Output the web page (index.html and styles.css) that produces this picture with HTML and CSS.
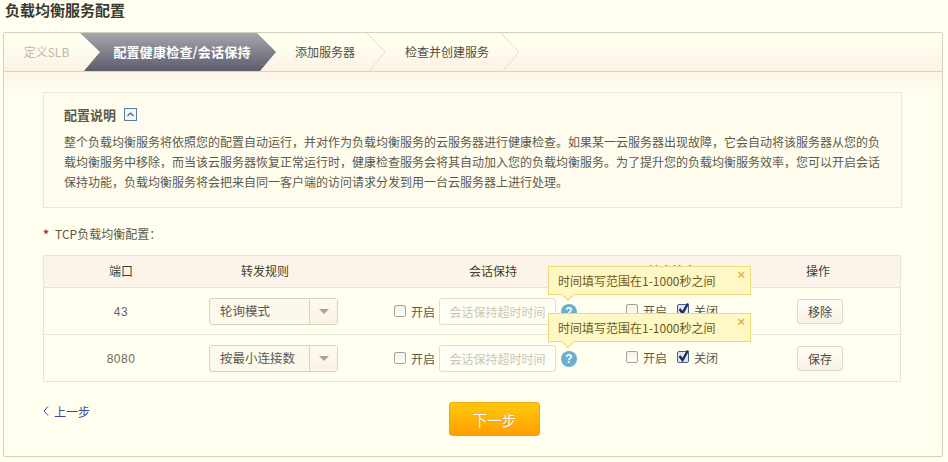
FILE: index.html
```html
<!DOCTYPE html>
<html lang="zh">
<head>
<meta charset="utf-8">
<title>负载均衡服务配置</title>
<link rel="stylesheet" href="styles.css">
</head>
<body>
<h1 class="title">负载均衡服务配置</h1>
<div class="panel">
  <div class="steps">
    <div class="step done">定义SLB</div>
    <div class="step active">配置健康检查/会话保持</div>
    <div class="step s3">添加服务器<svg class="chev" width="20" height="38" viewBox="0 0 20 38"><path d="M0 0L18 19L2 38" fill="none" stroke="#e2dcc8"/></svg></div>
    <div class="step s4">检查并创建服务<svg class="chev" width="20" height="38" viewBox="0 0 20 38"><path d="M0 0L18 19L2 38" fill="none" stroke="#e2dcc8"/></svg></div>
  </div>
  <div class="body">
    <section class="note">
      <div class="note-head"><b>配置说明</b><svg class="toggle" width="13" height="13" viewBox="0 0 13 13"><rect x=".5" y=".5" width="12" height="12" fill="#f6f6f0" stroke="#5a7ca0"/><path d="M3.5 8L6.5 5L9.5 8" fill="none" stroke="#3c6490" stroke-width="1.2"/></svg></div>
      <p>整个负载均衡服务将依照您的配置自动运行，并对作为负载均衡服务的云服务器进行健康检查。如果某一云服务器出现故障，它会自动将该服务器从您的负载均衡服务中移除，而当该云服务器恢复正常运行时，健康检查服务会将其自动加入您的负载均衡服务。为了提升您的负载均衡服务效率，您可以开启会话保持功能，负载均衡服务将会把来自同一客户端的访问请求分发到用一台云服务器上进行处理。</p>
    </section>
    <div class="label"><span class="star">*</span>TCP负载均衡配置：</div>
    <div class="table">
      <div class="row head">
        <div>端口</div><div>转发规则</div><div>会话保持</div><div class="head-hc">健康检查</div><div class="head-op">操作</div>
      </div>
      <div class="row">
        <div class="port">43</div>
        <div class="rule"><span class="select"><span class="sel-text">轮询模式</span><span class="sel-arrow"><i></i></span></span></div>
        <div class="sess"><span class="check"><i class="box"></i>开启</span><span class="input">会话保持超时时间</span>
          <span class="help">?<span class="tip">时间填写范围在1-1000秒之间<em>×</em></span></span></div>
        <div class="hc"><span class="check"><i class="box"></i>开启</span><span class="check"><i class="box on"><svg width="13" height="14" viewBox="0 0 13 14"><path d="M2.5 7L5.5 11L11 1.5" fill="none" stroke="#1b2f5c" stroke-width="2.4"/></svg></i>关闭</span></div>
        <div class="op"><button class="btn">移除</button></div>
      </div>
      <div class="row">
        <div class="port">8080</div>
        <div class="rule"><span class="select"><span class="sel-text">按最小连接数</span><span class="sel-arrow"><i></i></span></span></div>
        <div class="sess"><span class="check"><i class="box"></i>开启</span><span class="input">会话保持超时时间</span>
          <span class="help">?<span class="tip">时间填写范围在1-1000秒之间<em>×</em></span></span></div>
        <div class="hc"><span class="check"><i class="box"></i>开启</span><span class="check"><i class="box on"><svg width="13" height="14" viewBox="0 0 13 14"><path d="M2.5 7L5.5 11L11 1.5" fill="none" stroke="#1b2f5c" stroke-width="2.4"/></svg></i>关闭</span></div>
        <div class="op"><button class="btn">保存</button></div>
      </div>
    </div>
    <div class="foot">
      <a class="prev" href="#"><svg width="6" height="10" viewBox="0 0 6 10"><path d="M5 0.5L1 5L5 9.5" fill="none" stroke="#3a4a94"/></svg>上一步</a>
      <button class="next">下一步</button>
    </div>
  </div>
</div>
</body>
</html>
```
FILE: styles.css
```css
* { box-sizing: border-box; }
html, body { margin: 0; padding: 0; }
body {
  width: 948px; height: 462px; overflow: hidden;
  background: #fffeef;
  font-family: "Noto Sans CJK SC", "Liberation Sans", sans-serif;
  font-size: 12px; color: #5c5a4c;
  padding: 0 3px;
}
.title { margin: 0; height: 32px; padding: 0 0 0 2px; font-size: 15px; line-height: 20px; font-weight: 700; color: #3a3a30; }
.panel { width: 940px; height: 425px; border: 1px solid #d4d1ba; border-radius: 2px; background: #fffeef; }
.steps {
  display: flex; height: 39px; border-bottom: 1px solid #d8d4bf;
  background: linear-gradient(#fffeef 30%, #fdf2e4);
  line-height: 38px; font-size: 12px; color: #4f4e42;
}
.step { position: relative; flex: none; text-align: center; }
.done { width: 76px; color: #bdbbaa; padding-left: 9px; }
.active {
  width: 196px; padding-left: 8px; color: #fff; font-weight: 700; font-size: 13px; letter-spacing: .2px;
  background: linear-gradient(#a6a6af, #5c5c6b);
  clip-path: polygon(0 0, 177px 0, 196px 19px, 180px 38px, 4px 38px, 20px 19px);
}
.s3 { width: 109px; padding-right: 11px; }
.s4 { width: 134px; padding-right: 10px; }
.chev { position: absolute; right: -2px; top: 0; }
.body { padding: 20px 40px 0 39px; background: linear-gradient(#fdf5e7, #fffeef 20px) no-repeat; }
.note { height: 116px; border: 1px solid #ece8d5; background: #fffcee; padding: 10px 20px 0 20px; }
.note-head { display: flex; align-items: center; gap: 8px; height: 22px; }
.note-head b { font-size: 13px; color: #5c5a4c; }
.note p { margin: 7px 0 0; font-size: 12px; line-height: 20px; color: #5c5a4c; }
.label { height: 20px; margin-top: 16px; line-height: 20px; font-size: 12px; color: #5c5a4c; }
.star { color: #c4262b; margin-right: 6px; font-weight: 700; }
.table { margin-top: 11px; border: 1px solid #e8e4d4; width: 858px; }
.row { display: grid; grid-template-columns: 154px 187px 232px 170px 1fr; align-items: center; height: 47px; border-top: 1px solid #e8e4d4; }
.row.head { grid-template-columns: 154px 134px 322px 36px 1fr; height: 31px; padding-bottom: 2px; border-top: 0; background: #fdf4e9; color: #3f3e34; text-align: center; }
.head-hc { display: flex; justify-content: center; white-space: nowrap; }
.head-op { padding-left: 46px; }
.port { font-family: "Liberation Sans", sans-serif; font-size: 12px; letter-spacing: .5px; color: #6b6a5c; text-align: center; margin-top: 2px; }
.rule { padding-left: 11px; display: flex; }
.select { display: flex; width: 129px; height: 27px; border: 1px solid #d8d2be; border-radius: 3px; background: #fdf8ec; color: #5c5a4c; font-size: 12.5px; line-height: 23px; }
.sel-text { flex: 1; padding-left: 10px; }
.sel-arrow { width: 28px; border-left: 1px solid #d8d2be; display: flex; align-items: center; justify-content: center; background: linear-gradient(#fffbf0, #fbf1e4); }
.sel-arrow i { width: 0; height: 0; border: 5px solid transparent; border-top: 5px solid #a9a592; border-bottom: 0; }
.sess { display: flex; align-items: center; position: relative; padding-left: 9px; }
.check { display: inline-flex; align-items: center; gap: 5px; font-size: 12px; color: #5c5a4c; }
.box { position: relative; display: block; width: 12px; height: 12px; border: 1px solid #a8a596; border-radius: 2px; background: linear-gradient(#f1f0e8, #fff); }
.box.on { border-color: #47608c; background: #dfe6f2; }
.box.on svg { position: absolute; left: -1px; top: -3px; }
.input { width: 117px; height: 27px; margin-left: 4px; border: 1px solid #e2ddca; border-radius: 3px; background: #fffef4; color: #c9c7b7; font-size: 12px; line-height: 25px; text-align: center; white-space: nowrap; }
.help { position: relative; flex: none; width: 16px; height: 16px; margin: 1px 0 0 5px; border-radius: 50%; background: #6aaed0; color: #fff; text-align: center; font: 700 12px/16px "Liberation Sans", sans-serif; }
.tip { position: absolute; left: -13px; top: -38px; width: 203px; height: 29px; background: #fff7c4; border: 1px solid #f1d97a; color: #6e5a1e; font: 12px/27px "Noto Sans CJK SC", sans-serif; text-align: left; padding-left: 9px; white-space: nowrap; z-index: 2; }
.tip::after { content: ""; position: absolute; left: 14px; top: 22px; width: 9px; height: 9px; background: #fff7c4; border: solid #f1d97a; border-width: 0 1px 1px 0; transform: rotate(45deg); }
.tip em { position: absolute; right: 5px; top: 0; font: 700 13px/16px "Liberation Sans", sans-serif; color: #d9b64e; }
.hc { display: flex; align-items: center; gap: 10px; padding-left: 9px; margin-top: -2px; }
.op { padding-left: 10px; display: flex; }
.btn { width: 46px; height: 25px; padding: 0; border: 1px solid #ddd8c8; border-radius: 3px; background: linear-gradient(#fffdf6, #fbf0e5); font: 12px "Noto Sans CJK SC", sans-serif; color: #4a4940; }
.foot { position: relative; display: flex; height: 54px; padding: 20px 0 0 406px; }
.prev { position: absolute; left: 0; top: 20px; display: flex; align-items: center; gap: 5px; height: 18px; color: #3a4a94; text-decoration: none; font-size: 12px; }
.next { width: 91px; height: 34px; border: 1px solid #f0a810; border-radius: 3px; background: linear-gradient(#ffc80c, #ff9f00); color: #fff; text-shadow: 0 0 1px #c98a10; font: 14.5px "Noto Sans CJK SC", sans-serif; }
```
